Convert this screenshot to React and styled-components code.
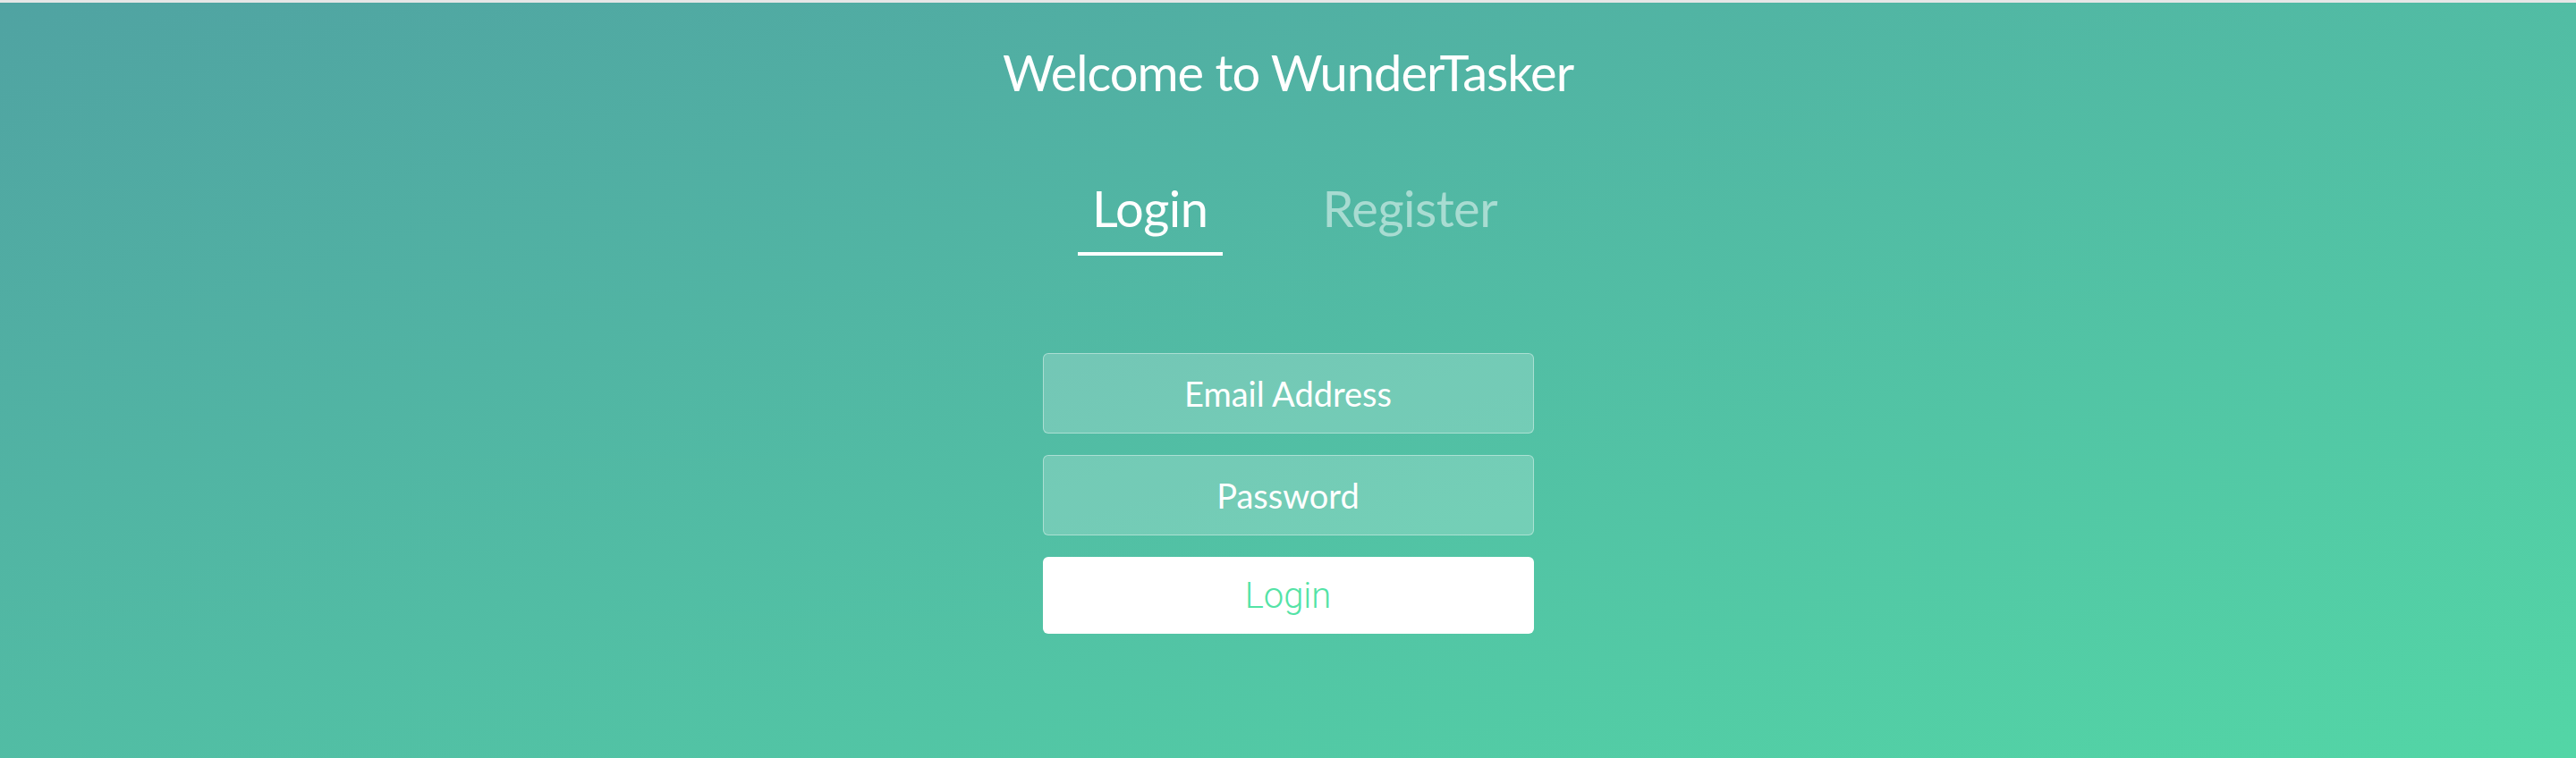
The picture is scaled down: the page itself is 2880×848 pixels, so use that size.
import React, { useState } from "react";
import styled, { createGlobalStyle } from "styled-components";

const GlobalStyle = createGlobalStyle`
  body {
    margin: 0;
    font-family: Lato, "Open Sans", sans-serif;
  }
`;

const TopStrip = styled.div`
  height: 3px;
  background: #e6e6e6;
`;

const Page = styled.main`
  height: 845px;
  display: flex;
  flex-direction: column;
  align-items: center;
  background: linear-gradient(to bottom right, #50a3a2 0%, #53d6a6 100%);
  color: #fff;
  overflow: hidden;
`;

const Title = styled.h1`
  margin: 44px 0 0;
  font-size: 56px;
  font-weight: 400;
  line-height: 68px;
  letter-spacing: -1px;
`;

const Tabs = styled.nav`
  display: flex;
  gap: 96px;
  margin-top: 84px;
  padding-left: 15px;
`;

const Tab = styled.button`
  padding: 0 16px 15px;
  border: none;
  border-bottom: 4px solid ${({ $active }) => ($active ? "#fff" : "transparent")};
  background: none;
  font-family: Lato, "Open Sans", sans-serif;
  font-size: 56px;
  line-height: 68px;
  letter-spacing: -0.5px;
  color: ${({ $active }) => ($active ? "#fff" : "rgba(255, 255, 255, 0.5)")};
  cursor: pointer;
`;

const Form = styled.form`
  display: flex;
  flex-direction: column;
  gap: 24px;
  margin-top: 109px;
`;

const Field = styled.input`
  box-sizing: border-box;
  width: 549px;
  height: 90px;
  border: 1px solid rgba(255, 255, 255, 0.4);
  border-radius: 6px;
  background: rgba(255, 255, 255, 0.2);
  font-family: Lato, "Open Sans", sans-serif;
  font-size: 38px;
  color: #fff;
  text-align: center;
  outline: none;

  &::placeholder {
    color: #fff;
    opacity: 1;
  }
`;

const Submit = styled.button`
  width: 549px;
  height: 86px;
  border: none;
  border-radius: 6px;
  background: #fff;
  font-family: Roboto, "Liberation Sans", sans-serif;
  font-size: 40px;
  font-weight: 300;
  color: #53e3a6;
  cursor: pointer;
`;

const App = () => {
  const [tab, setTab] = useState("login");

  return (
    <>
      <GlobalStyle />
      <TopStrip />
      <Page>
        <Title>Welcome to WunderTasker</Title>
        <Tabs>
          <Tab $active={tab === "login"} onClick={() => setTab("login")}>
            Login
          </Tab>
          <Tab $active={tab === "register"} onClick={() => setTab("register")}>
            Register
          </Tab>
        </Tabs>
        <Form onSubmit={(e) => e.preventDefault()}>
          <Field type="email" placeholder="Email Address" />
          <Field type="password" placeholder="Password" />
          <Submit type="submit">Login</Submit>
        </Form>
      </Page>
    </>
  );
};

export default App;
